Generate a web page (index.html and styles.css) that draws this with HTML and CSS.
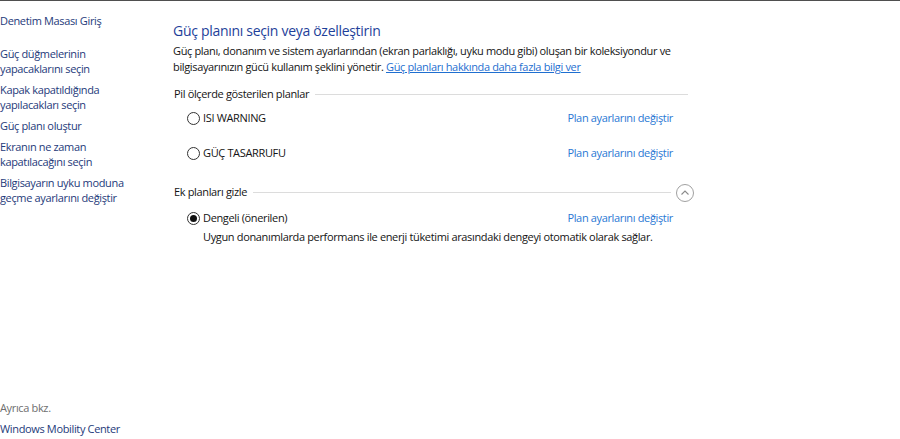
FILE: index.html
```html
<!DOCTYPE html>
<html lang="tr">
<head>
<meta charset="utf-8">
<link rel="stylesheet" href="styles.css">
</head>
<body>
<div class="page">
  <nav class="side">
    <a class="nav-home">Denetim Masası Giriş</a>
    <ul class="nav-list">
      <li><a>Güç düğmelerinin<br>yapacaklarını seçin</a></li>
      <li><a>Kapak kapatıldığında<br>yapılacakları seçin</a></li>
      <li><a>Güç planı oluştur</a></li>
      <li><a>Ekranın ne zaman<br>kapatılacağını seçin</a></li>
      <li><a>Bilgisayarın uyku moduna<br>geçme ayarlarını değiştir</a></li>
    </ul>
    <div class="see-also">
      <div class="see-title">Ayrıca bkz.</div>
      <a class="see-link">Windows Mobility Center</a>
    </div>
  </nav>
  <main class="main">
    <h1 class="title">Güç planını seçin veya özelleştirin</h1>
    <p class="desc">Güç planı, donanım ve sistem ayarlarından (ekran parlaklığı, uyku modu gibi) oluşan bir koleksiyondur ve<br>bilgisayarınızın gücü kullanım şeklini yönetir. <a class="link">Güç planları hakkında daha fazla bilgi ver</a></p>

    <div class="group-head head-1">
      <span class="group-label">Pil ölçerde gösterilen planlar</span>
      <span class="group-line"></span>
    </div>
    <div class="plan row-1">
      <label class="plan-name"><span class="radio"></span>ISI WARNING</label>
      <a class="plan-link">Plan ayarlarını değiştir</a>
    </div>
    <div class="plan row-2">
      <label class="plan-name"><span class="radio"></span>GÜÇ TASARRUFU</label>
      <a class="plan-link">Plan ayarlarını değiştir</a>
    </div>

    <div class="group-head head-2">
      <span class="group-label">Ek planları gizle</span>
      <span class="group-line"></span>
      <span class="collapse">
        <svg width="18" height="18" viewBox="0 0 18 18"><circle cx="9" cy="9" r="8.5" fill="#fff" stroke="#a0a0a0" stroke-width="1"/><path d="M5.5 10.5 L9 7 L12.5 10.5" fill="none" stroke="#8a8a8a" stroke-width="1.1"/></svg>
      </span>
    </div>
    <div class="plan row-3">
      <label class="plan-name"><span class="radio checked"></span>Dengeli (önerilen)</label>
      <a class="plan-link">Plan ayarlarını değiştir</a>
    </div>
    <p class="plan-desc">Uygun donanımlarda performans ile enerji tüketimi arasındaki dengeyi otomatik olarak sağlar.</p>
  </main>
</div>
</body>
</html>
```
FILE: styles.css
```css
html, body {
  margin: 0;
  padding: 0;
  background: #ffffff;
}
body {
  font-family: "Open Sans", "Noto Sans", sans-serif;
  font-size: 11px;
  letter-spacing: -0.35px;
  color: #141414;
  border-top: 1px solid #4f4f4f;
  height: 438px;
  overflow: hidden;
}
.page {
  display: flex;
  height: 100%;
}
.side {
  width: 173px;
  flex: none;
  display: flex;
  flex-direction: column;
  line-height: 15px;
  color: #1e3a7a;
}
.nav-home {
  margin-top: 12px;
}
.nav-list {
  list-style: none;
  margin: 18px 0 0;
  padding: 0;
  display: flex;
  flex-direction: column;
  gap: 6px;
}
.see-also {
  margin-top: auto;
  padding-bottom: 3px;
}
.see-title {
  color: #6e6e6e;
  margin-bottom: 6px;
}
.main {
  width: 520px;
  flex: none;
  line-height: 16px;
}
.title {
  margin: 20px 0 0;
  font-size: 14px;
  letter-spacing: -0.3px;
  font-weight: normal;
  line-height: 20px;
  color: #1e3f9a;
}
.desc {
  margin: 2px 0 0;
  white-space: nowrap;
}
.link {
  color: #1f6fd0;
  text-decoration: underline;
}
.group-head {
  display: flex;
  align-items: center;
  height: 16px;
  padding-left: 1px;
}
.head-1 { margin-top: 11px; }
.head-2 { margin-top: 23px; }
.group-label {
  padding-right: 6px;
}
.group-line {
  flex: 1;
  height: 1px;
  background: #dcdcdc;
  margin-right: 5px;
}
.collapse {
  display: flex;
  width: 18px;
  height: 18px;
  margin-right: -1px;
  transform: translateY(1px);
}
.plan {
  display: flex;
  justify-content: space-between;
  align-items: center;
  height: 16px;
  padding-left: 14px;
  padding-right: 20px;
}
.row-1 { margin-top: 8px; }
.row-2 { margin-top: 19px; }
.row-3 { margin-top: 10px; }
.plan-name {
  display: flex;
  align-items: center;
}
.radio {
  width: 11px;
  height: 11px;
  border: 1px solid #333;
  border-radius: 50%;
  margin-right: 3px;
  display: inline-flex;
  align-items: center;
  justify-content: center;
  box-sizing: content-box;
}
.radio.checked::after {
  content: "";
  width: 7px;
  height: 7px;
  border-radius: 50%;
  background: #111;
}
.plan-link {
  color: #2a78d4;
}
.plan-desc {
  margin: 3px 0 0 30px;
}
```
